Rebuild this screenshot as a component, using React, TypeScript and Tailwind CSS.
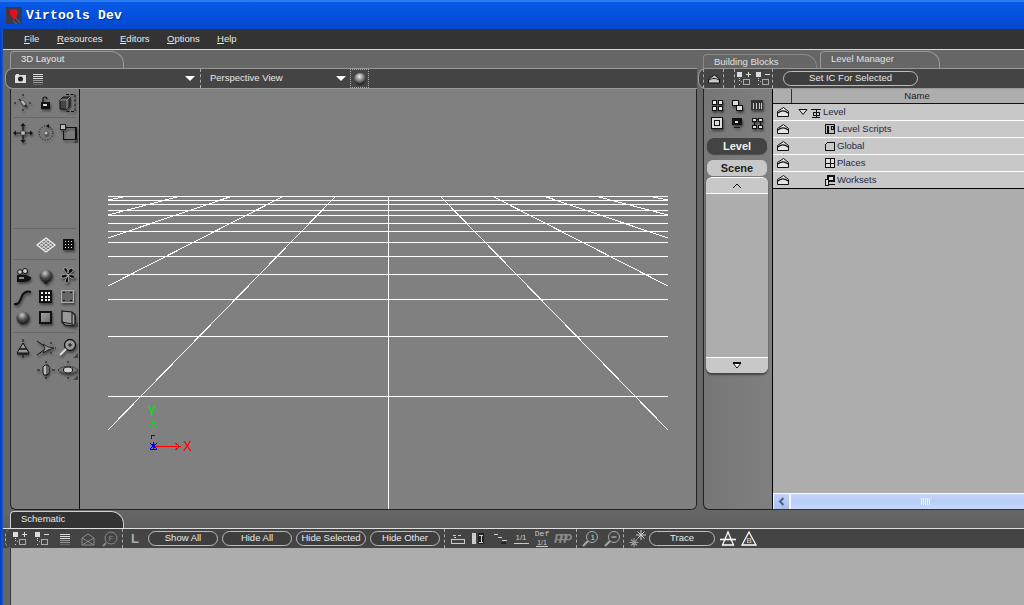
import React from "react";

const sans = "font-['Liberation_Sans',Arial,sans-serif]";

function Ic({ s = 20, w, h, children, shadow = true, crisp = false }: { s?: number; w?: number; h?: number; children: React.ReactNode; shadow?: boolean; crisp?: boolean }) {
  const W = w ?? s;
  const H = h ?? s;
  return (
    <svg
      width={W}
      height={H}
      viewBox={`0 0 ${W} ${H}`}
      shapeRendering={crisp ? "crispEdges" : "auto"}
      className={shadow ? "shrink-0 drop-shadow-[1px_2px_1px_rgba(0,0,0,0.45)]" : "shrink-0"}
    >
      {children}
    </svg>
  );
}

function Corner() {
  return <span className="absolute right-[1px] bottom-[1px] w-0 h-0 border-l-[5px] border-l-transparent border-b-[5px] border-b-[#444]" />;
}

function Cell({ children, corner }: { children?: React.ReactNode; corner?: boolean }) {
  return (
    <div className="relative flex items-center justify-center">
      {children}
      {corner ? <Corner /> : null}
    </div>
  );
}

const D = "#111";

const Sep = () => <div className="mx-[3px] border-t border-[#666] h-0" />;

function Sphere({ id, r = 6.5 }: { id: string; r?: number }) {
  return (
    <>
      <defs>
        <radialGradient id={id} cx="0.42" cy="0.28" r="0.8">
          <stop offset="0" stopColor="#c8c8c8" />
          <stop offset="0.5" stopColor="#4a4a4a" />
          <stop offset="1" stopColor="#0c0c0c" />
        </radialGradient>
      </defs>
      <circle cx="10" cy="10" r={r} fill={`url(#${id})`} />
    </>
  );
}

function LeftTools() {
  return (
    <div className="w-[68px] shrink-0 flex flex-col pt-[3px]">
      <div className="grid grid-cols-[23px_23px_22px] h-[22px]">
        <Cell>
          <Ic>
            <path d="M10 1v3M10 16v3M1 10h3M16 10h3" stroke={D} strokeDasharray="2 1" />
            <path d="M6 6l8 8" stroke="#222" strokeWidth="1.5" />
            <path d="M7 8l3-1 3 4-2 2z" fill="#bbb" stroke="#333" strokeWidth=".6" />
          </Ic>
        </Cell>
        <Cell>
          <Ic>
            <path d="M7 9V5.500C7 3.500 11 3.500 11 5.500V6" fill="none" stroke={D} strokeWidth="1.2" />
            <rect x="5" y="9" width="9" height="7" fill={D} />
            <rect x="7" y="11" width="4" height="2" fill="#ddd" />
          </Ic>
        </Cell>
        <Cell>
          <Ic>
            <path d="M8 1.500h9v17H8" fill="none" stroke={D} strokeDasharray="3 1.500" />
            <path d="M2 7l3-3h7v9l-3 3H2z" fill="#444" stroke={D} />
            <path d="M2 7h7v9M9 7l3-3" fill="none" stroke="#aaa" strokeWidth=".8" />
          </Ic>
        </Cell>
      </div>
      <div className="mt-[3px]"><Sep /></div>
      <div className="grid grid-cols-[23px_23px_22px] h-[22px] mt-[4px]">
        <Cell>
          <Ic>
            <path d="M2 10h16M10 2v16" stroke={D} strokeWidth="1.2" />
            <path d="M10 0l2.500 3h-5zM10 20l2.500-3h-5zM0 10l3-2.500v5zM20 10l-3-2.500v5z" fill={D} />
            <rect x="8" y="8" width="4" height="4" fill="#bbb" stroke="#333" strokeWidth=".6" />
          </Ic>
        </Cell>
        <Cell>
          <Ic>
            <circle cx="10" cy="10" r="7" fill="none" stroke={D} strokeDasharray="1.200 1.600" />
            <path d="M10 3l3-2v4z" fill={D} />
            <circle cx="10" cy="10" r="2" fill="#bbb" stroke="#333" strokeWidth=".6" />
          </Ic>
        </Cell>
        <Cell corner>
          <Ic crisp>
            <path d="M8 4.500h10v12H5.500V8" fill="none" stroke={D} strokeWidth="1.300" />
            <rect x="2.500" y="1.500" width="5" height="5" fill="#bbb" stroke="#222" />
          </Ic>
        </Cell>
      </div>
      <div className="h-[84px]" />
      <Sep />
      <div className="grid grid-cols-[23px_23px_22px] h-[22px] mt-[5px]">
        <Cell />
        <Cell>
          <Ic w={20} h={16} shadow={false}>
            <path d="M10 1l9 7-9 7-9-7z" fill="none" stroke="#f2f2f2" strokeWidth="1.200" />
            <path d="M5.500 4.500l9 7M14.500 4.500l-9 7M3.200 6.200l9 7M16.800 6.200l-9 7M7.800 2.800l9 7M12.200 2.800l-9 7" stroke="#f2f2f2" strokeWidth=".8" />
          </Ic>
        </Cell>
        <Cell>
          <Ic crisp>
            <rect x="5" y="4" width="11" height="11" fill={D} />
            <path d="M7 6h1v1H7zM10 6h1v1h-1zM13 6h1v1h-1zM7 9h1v1H7zM10 9h1v1h-1zM13 9h1v1h-1zM7 12h1v1H7zM10 12h1v1h-1zM13 12h1v1h-1z" fill="#ddd" />
          </Ic>
        </Cell>
      </div>
      <div className="mt-[3px]"><Sep /></div>
      <div className="grid grid-cols-[23px_23px_22px] grid-rows-[21px_21px_21px] mt-[5px]">
        <Cell>
          <Ic>
            <circle cx="12" cy="5" r="2.500" fill="#ccc" stroke={D} />
            <circle cx="7" cy="6" r="2.300" fill="#ccc" stroke={D} />
            <path d="M4 9h9l5 2v2c-2 2-4 3-8 3H4z" fill={D} />
            <path d="M6 11h5v2H6z" fill="#888" />
          </Ic>
        </Cell>
        <Cell>
          <Ic>
            <Sphere id="bulb" r={6.5} />
            <path d="M7.500 15l1 3h3l1-3z" fill="#222" />
          </Ic>
        </Cell>
        <Cell>
          <Ic>
            <path d="M10 9C7 5 5 4 6 2c2-1 4 1 4 5 0-4 3-6 5-4 1 2-2 4-5 6 3-1 7 0 7 2-1 3-5 1-7-2 1 3 1 8-1 8-3 0-2-4 1-7-3 2-6 3-7 1 0-3 4-3 7-2z" fill={D} stroke="#ccc" strokeWidth=".7" />
          </Ic>
        </Cell>
        <Cell>
          <Ic>
            <path d="M1 17c5 1 6-3 8-8 2-4 5-5 9-4" fill="none" stroke={D} strokeWidth="2.200" />
          </Ic>
        </Cell>
        <Cell>
          <Ic crisp>
            <rect x="3" y="3" width="13" height="13" fill={D} />
            <path d="M5 5h2v2H5zM8.500 5h2v2h-2zM12 5h2v2h-2zM5 8.500h2v2H5zM8.500 8.500h2v2h-2zM12 8.500h2v2h-2zM5 12h2v2H5zM8.500 12h2v2h-2zM12 12h2v2h-2z" fill="#eee" />
          </Ic>
        </Cell>
        <Cell>
          <Ic crisp>
            <rect x="3.500" y="3.500" width="12" height="12" fill="#666" stroke="#aaa" />
            <path d="M5 5h2v1H5zM12 5h2v1h-2zM5 13h2v1H5zM12 13h2v1h-2z" fill="#111" />
          </Ic>
        </Cell>
        <Cell>
          <Ic>
            <Sphere id="ball" r={6.5} />
          </Ic>
        </Cell>
        <Cell>
          <Ic crisp>
            <defs>
              <linearGradient id="sq" x1="0" y1="0" x2="1" y2="1">
                <stop offset="0" stopColor="#aaa" />
                <stop offset="1" stopColor="#666" />
              </linearGradient>
            </defs>
            <rect x="4" y="4" width="11" height="11" fill="url(#sq)" stroke={D} strokeWidth="1.400" />
          </Ic>
        </Cell>
        <Cell corner>
          <Ic>
            <path d="M4 3l10 1 3 3v11l-10-1-3-3z" fill="#999" stroke={D} strokeWidth="1.200" />
            <path d="M14 4v12l3 2M14 16L4 14" fill="none" stroke={D} />
          </Ic>
        </Cell>
      </div>
      <div className="mt-[4px]"><Sep /></div>
      <div className="grid grid-cols-[23px_23px_22px] grid-rows-[22px_22px] mt-[4px]">
        <Cell>
          <Ic>
            <path d="M10 1v3M10 17v3M4 16h12" stroke={D} />
            <path d="M10 5l6 10H4z" fill="#999" stroke={D} />
            <path d="M6 11h8" stroke={D} strokeWidth="1.500" />
          </Ic>
        </Cell>
        <Cell>
          <Ic>
            <path d="M1 3l7 5M1 17l7-5" stroke={D} />
            <path d="M7 6l5 3 6 1-6 2-5 3 2-5z" fill="#999" stroke={D} strokeWidth=".8" />
            <path d="M15 4v2M15 14v2M19 10h1" stroke={D} />
          </Ic>
        </Cell>
        <Cell corner>
          <Ic>
            <circle cx="12" cy="7" r="5.500" fill="#999" stroke={D} strokeWidth="1.300" />
            <path d="M10 7h4M12 5v4" stroke={D} />
            <path d="M8 11l-6 6" stroke="#ddd" strokeWidth="2" />
          </Ic>
        </Cell>
        <Cell />
        <Cell>
          <Ic>
            <path d="M1 10h3M16 10h3M10 1v2M10 17v2" stroke={D} />
            <path d="M7 7l2-2h3l1 2v6l-2 2H8l-1-2z" fill="#bbb" stroke={D} />
            <path d="M11 5v10" stroke={D} />
          </Ic>
        </Cell>
        <Cell corner>
          <Ic w={24} h={20}>
            <path d="M2 10c5-5 15-5 20 0-5 5-15 5-20 0z" fill="#777" stroke="#333" strokeDasharray="2 1" />
            <ellipse cx="12" cy="10" rx="4.500" ry="3" fill="#ccc" stroke={D} />
            <path d="M12 1v2M12 17v2" stroke={D} />
          </Ic>
        </Cell>
      </div>
    </div>
  );
}

function Grid() {
  const ys = [196, 200, 204, 210, 215, 223, 231, 242, 256, 274, 299, 336, 396];
  const diag: [number, number, number][] = [
    [335.5, 108, 430],
    [283, 108, 286],
    [231, 108, 238],
    [179, 108, 215],
    [126, 108, 200],
  ];
  return (
    <svg width="616" height="421" viewBox="80 89 616 421" className="block">
      <g stroke="#fff" strokeWidth="1" shapeRendering="crispEdges">
        {ys.map((y) => (
          <line key={y} x1="108" x2="668" y1={y + 0.5} y2={y + 0.5} />
        ))}
        <line x1="388.500" x2="388.500" y1="196" y2="510" />
      </g>
      <g stroke="#fff" strokeWidth="1" shapeRendering="crispEdges">
        {diag.map(([x, ex, ey]) => (
          <React.Fragment key={x}>
            <line x1={x} y1="196.500" x2={ex} y2={ey} />
            <line x1={776 - x} y1="196.500" x2={776 - ex} y2={ey} />
          </React.Fragment>
        ))}
      </g>
      <g shapeRendering="crispEdges">
        <line x1="153.500" y1="421" x2="153.500" y2="446" stroke="#00e000" />
        <path d="M150 427l3.500-7 3.500 7" fill="none" stroke="#00e000" />
        <text x="148" y="416" fontSize="14" fill="#00e000" fontFamily="'Liberation Mono', monospace">Y</text>
        <line x1="154" y1="446.500" x2="180" y2="446.500" stroke="#ff0000" />
        <path d="M175 443l5 3.500-5 3.500" fill="none" stroke="#ff0000" />
        <text x="183" y="451" fontSize="15" fill="#ff0000" fontFamily="'Liberation Mono', monospace">X</text>
        <path d="M151 439v-4h4M150 449h7M153 442v7M150 443l7 6M157 443l-7 6" fill="none" stroke="#0000ff" />
      </g>
    </svg>
  );
}

const TreePlus = ({ sign, w = 20 }: { sign: "+" | "-"; w?: number }) => (
  <Ic shadow={false} crisp w={w} h={20}>
    <path d="M2 3h5v5H2z" fill="#ddd" />
    <path d="M4 9v4M4 15h1" stroke="#ccc" strokeDasharray="1 1" />
    <path d="M6 12h1M8 15h6v-5H8z" fill="none" stroke="#aaa" />
    <path d={sign === "+" ? "M11 5h5M13.500 3v5" : "M11 5h5"} stroke="#ddd" fill="none" />
  </Ic>
);

const ListIc = () => (
  <Ic shadow={false} crisp s={14}>
    <path d="M2 2.500h10M2 4.500h10M2 6.500h10" stroke="#ddd" />
    <path d="M2 8.500h10M2 10.500h10" stroke="#999" />
    <path d="M2 12.500h10" stroke="#666" />
  </Ic>
);

const Arrow = () => <span className="w-0 h-0 border-l-[5px] border-r-[5px] border-t-[5px] border-l-transparent border-r-transparent border-t-[#fff] shrink-0" />;

const VSep = () => <div className="h-full border-l border-dashed border-[#aaa] shrink-0" />;

function Pill({ label, w }: { label: string; w: number }) {
  return (
    <div
      style={{ width: w }}
      className="h-[15px] shrink-0 pb-[2px] rounded-full border border-[#bdbdbd] bg-[#3e3e3e] flex items-center justify-center text-[9.5px] leading-none text-[#e8e8e8]"
    >
      {label}
    </div>
  );
}

const Eject = () => (
  <Ic shadow={false} s={16}>
    <path d="M2.500 8l6-4 5 4v4h-11z" fill="#c8c8c8" stroke="#111" />
    <path d="M3 9c3-2 7-2 10 0" fill="none" stroke="#111" />
  </Ic>
);

const EyeSwitch = () => (
  <Ic shadow={false} s={14}>
    <path d="M1.500 6.500l6-4 5 4v5h-11z" fill="#e4e4e4" stroke="#111" />
    <path d="M2 8c3-2.500 7-2.500 10 0" fill="none" stroke="#111" strokeWidth="1.200" />
  </Ic>
);

function TreeRow({ icon, label, indent, last, arrow }: { icon: React.ReactNode; label: string; indent: number; last?: boolean; arrow?: boolean }) {
  return (
    <div className={`h-[17px] bg-[#c8c8c8] flex items-center border-b ${last ? "border-[#000]" : "border-[#fff]"}`}>
      <div className="w-[19px] flex justify-center shrink-0"><EyeSwitch /></div>
      <div style={{ width: indent }} className="shrink-0 flex items-center justify-end">
        {arrow ? (
          <svg width="10" height="8" className="mr-[2px]" viewBox="0 0 10 8"><path d="M1 1.500h8L5 6.500z" fill="#ddd" stroke="#111" /></svg>
        ) : null}
      </div>
      {icon}
      <span className="text-[9.5px] leading-none text-[#1d2a44] ml-[1px]">{label}</span>
    </div>
  );
}

const TIc = ({ children }: { children: React.ReactNode }) => (
  <Ic shadow={false} crisp s={12}>{children}</Ic>
);

const SideIc = ({ children }: { children: React.ReactNode }) => (
  <div className="flex items-center justify-center"><Ic crisp s={14}>{children}</Ic></div>
);

export default function App() {
  return (
    <div className={`w-[1024px] h-[605px] overflow-hidden flex flex-col ${sans} bg-[#666]`}>
      {/* Title bar */}
      <div className="h-[29px] shrink-0 flex items-center pl-[6px] bg-gradient-to-b from-[#0a5ae6] via-[#0450e0] to-[#0648cc] border-t-2 border-t-[#2a7bf0]">
        <div className="w-[16px] h-[17px] bg-[#3a3a4a] flex items-center justify-center overflow-hidden">
          <svg width="16" height="17" viewBox="0 0 16 17">
            <path d="M4 3l5-1 3 2-1 5-3 4-4-6z" fill="#e01020" />
            <path d="M9 10l5 6M7 14l4 3" stroke="#667" />
          </svg>
        </div>
        <span className="ml-[4px] font-['Liberation_Mono',monospace] font-bold text-[13px] leading-none text-white tracking-[0.2px] [text-shadow:1px_1px_0_#0a2a80]">Virtools Dev</span>
      </div>

      <div className="flex flex-1 min-h-0">
        <div className="w-[3px] shrink-0 bg-gradient-to-r from-[#0838b8] to-[#0a5ae8]" />
        <div className="flex-1 flex flex-col min-w-0">
          {/* Menu */}
          <div className="h-[20px] shrink-0 bg-[#333] flex items-center text-[9.5px] leading-none text-[#e8e8e8] pl-[21px]">
            <span className="w-[33px]"><u>F</u>ile</span>
            <span className="w-[63px]"><u>R</u>esources</span>
            <span className="w-[47px]"><u>E</u>ditors</span>
            <span className="w-[50px]"><u>O</u>ptions</span>
            <span><u>H</u>elp</span>
          </div>
          <div className="h-px shrink-0 bg-[#d8d8d8]" />

          {/* Main */}
          <div className="h-[460px] shrink-0 flex">
            <div className="w-[694px] shrink-0 flex flex-col">
              <div className="h-[18px] shrink-0 pl-[7px] flex items-end">
                <div className="w-[114px] h-[17px] pb-[2px] rounded-tl-[4px] rounded-tr-[13px] border-t border-r border-l border-[#9a9a9a] bg-[#666] flex items-center pl-[10px] text-[9.5px] leading-none text-[#e8e8e8]">3D Layout</div>
              </div>
              <div className="h-[21px] shrink-0 ml-[2px] rounded-l-[8px] border border-r-0 border-[#999] bg-[#444] flex items-center text-[9.5px] leading-none text-[#e8e8e8]">
                <div className="ml-[5px] w-[20px] flex justify-center">
                  <Ic shadow={false} s={14}>
                    <rect x="1" y="3" width="11" height="8" fill="#ddd" />
                    <path d="M2 3h3V2H2z" fill="#ddd" />
                    <circle cx="6.500" cy="7" r="2.500" fill="#222" />
                  </Ic>
                </div>
                <ListIc />
                <div className="flex-[0_0_155px] flex justify-end pr-[5px]"><Arrow /></div>
                <VSep />
                <span className="ml-[9px] mb-[2px] w-[126px]">Perspective View</span>
                <Arrow />
                <div className="ml-[4px] w-[19px] h-[19px] border border-dotted border-[#aaa] flex items-center justify-center">
                  <Ic shadow={false} s={14}>
                    <defs>
                      <radialGradient id="mini" cx="0.45" cy="0.3" r="0.7">
                        <stop offset="0" stopColor="#eee" />
                        <stop offset="1" stopColor="#111" />
                      </radialGradient>
                    </defs>
                    <circle cx="7" cy="7" r="6" fill="url(#mini)" />
                  </Ic>
                </div>
              </div>
              <div className="flex-1 min-h-0 ml-[7px] flex border-l border-b border-r border-[#222] rounded-b-[6px] overflow-hidden bg-[#7b7b7b]">
                <LeftTools />
                <div className="w-px bg-[#111] shrink-0" />
                <div className="flex-1 bg-[#808080] overflow-hidden"><Grid /></div>
              </div>
            </div>

            <div className="flex-1 min-w-0 flex flex-col">
              <div className="h-[18px] shrink-0 pl-[6px] flex items-end">
                <div className="w-[114px] h-[14px] rounded-tl-[4px] rounded-tr-[13px] border-t border-r border-l border-[#8a8a8a] bg-[#666] flex items-center pl-[10px] text-[9.5px] leading-none text-[#e0e0e0]">Building Blocks</div>
                <div className="ml-[3px] w-[120px] h-[17px] pb-[2px] rounded-tl-[4px] rounded-tr-[13px] border-t border-r border-l border-[#9a9a9a] bg-[#666] flex items-center pl-[10px] text-[9.5px] leading-none text-[#e0e0e0]">Level Manager</div>
              </div>
              <div className="h-[21px] shrink-0 ml-px rounded-l-[8px] border border-r-0 border-[#999] bg-[#444] flex items-center text-[9.5px] leading-none">
                <div className="w-[4px]" />
                <VSep />
                <div className="w-[19px] flex justify-center"><Eject /></div>
                <VSep />
                <div className="w-[10px]" />
                <VSep />
                <TreePlus sign="+" w={18} />
                <div className="w-px" />
                <TreePlus sign="-" w={18} />
                <VSep />
                <div className="w-[10px]" />
                <Pill label="Set IC For Selected" w={135} />
              </div>
              <div className="flex-1 min-h-0 ml-[6px] flex">
                <div className="w-[69px] shrink-0 pr-[2px] border-l border-b border-[#222] rounded-bl-[6px] bg-gradient-to-r from-[#777] to-[#7f7f7f] flex flex-col items-center">
                  <div className="grid grid-cols-[20px_20px_20px] grid-rows-[18px_18px] mt-[7px]">
                    <SideIc><path d="M2 2h4v4H2zM8 2h4v4H8zM2 8h4v4H2zM8 8h4v4H8z" fill="#eee" stroke="#111" /></SideIc>
                    <SideIc><path d="M2 2h6v5H2zM6 7h6v5H6z" fill="#ddd" stroke="#111" /></SideIc>
                    <SideIc><path d="M1 2h12v10H1z" fill="#333" /><path d="M3 5h1v6H3zM6 5h1v6H6zM9 5h1v6H9zM11 5h1v6h-1z" fill="#ccc" /></SideIc>
                    <SideIc><rect x="1.500" y="1.500" width="11" height="11" fill="#ddd" stroke="#111" /><circle cx="7" cy="7" r="3" fill="none" stroke="#111" /></SideIc>
                    <SideIc><path d="M2 2h10v7H2z" fill="#111" /><path d="M4 4h4v3H4zM4 11h6" fill="#ddd" stroke="#111" /></SideIc>
                    <SideIc><path d="M2 2h4v3H2zM8 2h4v3H8zM2 9h4v3H2zM8 9h4v3H8z" fill="#ddd" stroke="#111" /><path d="M4 5v4M6 3h2M10 5v4" stroke="#111" /></SideIc>
                  </div>
                  <div className="mt-[6px] w-[60px] h-[16px] rounded-[7px] bg-[#434343] flex items-center justify-center text-[11px] font-bold leading-none text-[#f0f0f0] shadow-[0_1px_1px_rgba(0,0,0,0.4)]">Level</div>
                  <div className="mt-[6px] w-[60px] h-[16px] rounded-[6px] bg-[#c8c8c8] flex items-center justify-center text-[11px] font-bold leading-none text-[#222]">Scene</div>
                  <div className="mt-px w-[62px] h-[196px] rounded-[6px] bg-[#adadad] flex flex-col overflow-hidden shadow-[0_2px_2px_rgba(0,0,0,0.45)]">
                    <div className="h-[17px] shrink-0 bg-[#c8c8c8] border-b border-white flex items-center justify-center border-t border-t-white rounded-t-[6px]">
                      <svg width="10" height="6" viewBox="0 0 10 6"><path d="M1 5l4-4 4 4" fill="none" stroke="#111" /></svg>
                    </div>
                    <div className="flex-1" />
                    <div className="h-[16px] shrink-0 bg-[#c8c8c8] border-t border-white flex items-center justify-center">
                      <svg width="10" height="7" viewBox="0 0 10 7"><path d="M1 1h8L5 6z" fill="#fff" stroke="#111" /><path d="M1 1h8" stroke="#111" strokeWidth="2" /></svg>
                    </div>
                  </div>
                </div>
                <div className="flex-1 min-w-0 flex flex-col bg-[#adadad] border-l border-[#000] border-b-[#333] border-b">
                  <div className="h-[15px] shrink-0 border-b border-[#111] flex text-[9.5px] leading-none text-[#222]">
                    <div className="w-[19px] border-r border-[#333]" />
                    <div className="flex-1 flex items-center justify-center pl-[18px]">Name</div>
                  </div>
                  <TreeRow arrow indent={18} label="Level" icon={<TIc><path d="M1 3h10M6 3v8M2 11h8M3 6h6M3 6v3h6V6" fill="none" stroke="#111" /></TIc>} />
                  <TreeRow indent={32} label="Level Scripts" icon={<TIc><rect x="1.500" y="1.500" width="9" height="9" fill="#bbb" stroke="#111" /><path d="M3 3h2v7H3z" fill="#111" /><path d="M7 3h2v3H7z" fill="none" stroke="#111" /></TIc>} />
                  <TreeRow indent={32} label="Global" icon={<TIc><path d="M1.500 4.500l2-2h7v8h-9z" fill="#c8c8c8" stroke="#111" /></TIc>} />
                  <TreeRow indent={32} label="Places" icon={<TIc><path d="M1.500 1.500h9v9h-9zM6 1.500v9M1.500 6h9" fill="#ddd" stroke="#111" /></TIc>} />
                  <TreeRow last indent={32} label="Worksets" icon={<TIc><path d="M3 1h8v7H3z" fill="#111" /><path d="M5 3h4v3H5z" fill="#ddd" /><path d="M1 5h3v6H1z" fill="#ddd" stroke="#111" /><path d="M4 10h7" stroke="#111" /></TIc>} />
                  <div className="flex-1" />
                  <div className="h-[16px] shrink-0 border-t border-white flex bg-[#f4f6fc]">
                    <div className="w-[15px] ml-px bg-gradient-to-b from-[#c2d2f8] to-[#a9c0f2] flex items-center justify-center">
                      <svg width="7" height="9" viewBox="0 0 7 9"><path d="M5.500 1l-3.500 3.500 3.500 3.500" fill="none" stroke="#4d6185" strokeWidth="2" /></svg>
                    </div>
                    <div className="flex-1 ml-[2px] bg-gradient-to-b from-[#c6d6fb] via-[#b9cdfa] to-[#c9d8fc] flex items-center justify-center pl-[36px]">
                      <div className="w-[9px] h-[7px] flex justify-between">
                        <i className="w-px bg-[#f0f4ff]" /><i className="w-px bg-[#f0f4ff]" /><i className="w-px bg-[#f0f4ff]" /><i className="w-px bg-[#f0f4ff]" /><i className="w-px bg-[#f0f4ff]" />
                      </div>
                    </div>
                  </div>
                </div>
              </div>
            </div>
          </div>

          {/* Schematic */}
          <div className="h-[18px] shrink-0 pl-[7px] flex items-end bg-gradient-to-b from-[#666] to-[#5f5f5f]">
            <div className="w-[114px] h-[17px] pb-[2px] rounded-tl-[4px] rounded-tr-[13px] border-t border-r border-l border-[#cfcfcf] bg-[#333] flex items-center pl-[10px] text-[9.5px] leading-none text-[#e8e8e8]">Schematic</div>
          </div>
          <div className="h-[20px] shrink-0 border-t border-[#e0e0e0] bg-[#444] ml-0 flex items-center text-[9.5px] leading-none">
            <div className="ml-[2px] h-full rounded-l-[6px] border-l border-dashed border-[#aaa] flex items-center">
              <div className="w-[5px]" />
              <TreePlus sign="+" />
              <div className="w-[2px]" />
              <TreePlus sign="-" />
              <div className="w-[5px]" />
              <ListIc />
              <div className="w-[8px]" />
              <Ic shadow={false} s={16}>
                <path d="M2 7l6-4 6 4v7H2z" fill="none" stroke="#888" />
                <path d="M2 7l12 7M14 7L2 14" stroke="#888" />
              </Ic>
              <div className="w-[6px]" />
              <Ic shadow={false} s={16}>
                <circle cx="9" cy="7" r="6" fill="none" stroke="#888" />
                <path d="M4 12l-3 3" stroke="#888" strokeWidth="2" />
                <text x="6.500" y="10" fontSize="8" fill="#888">F</text>
              </Ic>
              <div className="w-[4px]" />
            </div>
            <VSep />
            <span className="ml-[8px] w-[17px] text-[13px] font-bold text-[#aaa]">L</span>
            <Pill label="Show All" w={70} />
            <div className="w-[4px]" />
            <Pill label="Hide All" w={70} />
            <div className="w-[4px]" />
            <Pill label="Hide Selected" w={70} />
            <div className="w-[4px]" />
            <Pill label="Hide Other" w={70} />
            <div className="w-[4px]" />
            <VSep />
            <div className="w-[4px]" />
            <Ic shadow={false} crisp s={18}>
              <path d="M4 5h3M9 5h3M2.500 9.500h13v4h-13z" fill="none" stroke="#ccc" />
              <path d="M5 7h2" stroke="#ccc" />
            </Ic>
            <div className="w-[3px]" />
            <Ic shadow={false} crisp s={18}>
              <path d="M2 3h4v11H2z" fill="#ccc" />
              <path d="M8 3h6v11H8z" fill="#222" />
              <path d="M9 5h4M11 5v7M9 12h4" stroke="#ccc" />
            </Ic>
            <div className="w-[3px]" />
            <Ic shadow={false} crisp s={18}>
              <path d="M3 4h4v1H3zM7 7h4v1H7zM11 10h5v1h-5z" fill="#ccc" />
              <path d="M10 12h5v2h-5z" fill="#222" />
            </Ic>
            <div className="w-[3px]" />
            <div className="w-[18px] flex flex-col items-center text-[#ccc]">
              <span className="text-[8px] leading-none">1/1</span>
              <span className="w-[15px] h-px bg-[#ccc] mt-[1px]" />
            </div>
            <div className="w-[3px]" />
            <div className="w-[18px] flex flex-col items-center text-[#ccc]">
              <span className="text-[8px] leading-none font-['Liberation_Mono',monospace]">Def</span>
              <span className="text-[7px] leading-none mt-[1px]">1/1</span>
              <span className="w-[12px] h-px bg-[#ccc]" />
            </div>
            <div className="w-[3px]" />
            <div className="w-[18px] text-[13px] font-bold italic text-[#888] leading-none tracking-[-4px]">PPP</div>
            <div className="w-[4px]" />
            <VSep />
            <div className="w-[3px]" />
            <Ic shadow={false} s={20}>
              <circle cx="12" cy="8" r="5.500" fill="none" stroke="#aaa" />
              <path d="M8 12l-5 5" stroke="#aaa" strokeWidth="2" />
              <text x="10.500" y="11" fontSize="8" fill="#ccc">1</text>
            </Ic>
            <div className="w-[2px]" />
            <Ic shadow={false} s={20}>
              <circle cx="12" cy="8" r="5.500" fill="none" stroke="#aaa" />
              <path d="M8 12l-5 5" stroke="#aaa" strokeWidth="2" />
              <path d="M9.500 8h5" stroke="#ccc" />
            </Ic>
            <div className="w-[1px]" />
            <VSep />
            <div className="w-[4px]" />
            <Ic shadow={false} s={20}>
              <path d="M13 1v10M8 6h10M9.500 2.500l7 7M16.500 2.500l-7 7" stroke="#ccc" strokeWidth="1" />
              <path d="M6 9v9M1.500 13.500h9M3 10.500l6 6M9 10.500l-6 6" stroke="#999" strokeWidth="1.200" />
            </Ic>
            <div className="w-[1px]" />
            <Pill label="Trace" w={66} />
            <div className="w-[4px]" />
            <Ic shadow={false} s={18}>
              <path d="M9 2L3.500 15h11z" fill="#444" stroke="#fff" strokeWidth="1.300" />
              <path d="M1 9.500h16" stroke="#fff" strokeWidth="1.600" />
            </Ic>
            <div className="w-[3px]" />
            <Ic shadow={false} s={18}>
              <path d="M9 2L2 15h14z" fill="#444" stroke="#fff" strokeWidth="1.300" />
              <text x="6.500" y="13" fontSize="8" fill="#ddd">B</text>
            </Ic>
          </div>
          <div className="flex-1 flex">
            <div className="w-[7px] bg-[#666] shrink-0" />
            <div className="flex-1 bg-[#adadad] border-l border-[#333]" />
          </div>
        </div>
      </div>
    </div>
  );
}
